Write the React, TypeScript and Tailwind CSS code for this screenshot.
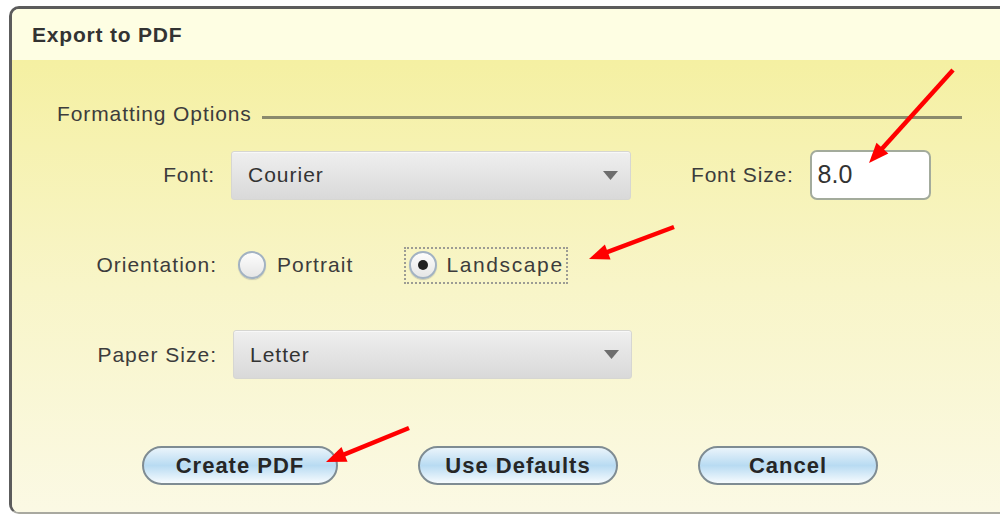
import React from "react";

type Arrow = { x1: number; y1: number; x2: number; y2: number };

// red call-outs drawn on top of the dialog
const arrows: Arrow[] = [
  { x1: 953, y1: 70, x2: 869, y2: 163 },
  { x1: 674, y1: 227, x2: 589, y2: 259 },
  { x1: 409, y1: 428, x2: 326, y2: 462 },
];

function ArrowMark({ x1, y1, x2, y2 }: Arrow) {
  const dx = x2 - x1;
  const dy = y2 - y1;
  const len = Math.hypot(dx, dy);
  const ux = dx / len;
  const uy = dy / len;
  const headLen = 20;
  const headW = 8;
  const bx = x2 - ux * headLen;
  const by = y2 - uy * headLen;
  const pts = [
    `${x2},${y2}`,
    `${bx - uy * headW},${by + ux * headW}`,
    `${bx + uy * headW},${by - ux * headW}`,
  ].join(" ");
  return (
    <g>
      <line x1={x1} y1={y1} x2={bx + ux * 2} y2={by + uy * 2} stroke="#ff0000" strokeWidth={4.5} />
      <polygon points={pts} fill="#ff0000" />
    </g>
  );
}

function Caret() {
  return (
    <svg width="15" height="9" viewBox="0 0 15 9">
      <polygon points="0,0 15,0 7.5,9" fill="#6e6e6e" />
    </svg>
  );
}

function Select({ value, width }: { value: string; width: string }) {
  return (
    <div
      className={`${width} h-[49px] flex items-center justify-between pl-[16px] pr-[12px] rounded-[3px] border border-[#d6d6d2] bg-gradient-to-b from-[#efefef] to-[#d9d9d9] shadow-[inset_0_1px_0_#f8f8f8]`}
    >
      <span className="text-[21px] tracking-[1px] text-[#333]">{value}</span>
      <Caret />
    </div>
  );
}

function Radio({ checked }: { checked?: boolean }) {
  return (
    <div className="w-[28px] h-[28px] rounded-full border-2 border-[#a2b2c2] bg-gradient-to-b from-[#fdfdfd] to-[#e6e6e6] flex items-center justify-center shadow-[0_1px_1px_#c9c9b0]">
      {checked && <div className="w-[10px] h-[10px] rounded-full bg-[#1f1f1f]" />}
    </div>
  );
}

function PillButton({ label, width }: { label: string; width: string }) {
  return (
    <div
      className={`${width} h-[39px] rounded-full border-2 border-[#7f8c93] bg-gradient-to-b from-[#eaf4fb] via-[#b8dbf2] to-[#f6fbfe] flex items-center justify-center`}
    >
      <span className="text-[22px] font-bold tracking-[1px] text-[#262626]">{label}</span>
    </div>
  );
}

export default function App() {
  return (
    <div className="relative w-[1000px] h-[516px] overflow-hidden bg-white pt-[6px] pl-[9px] font-['Liberation_Sans',Arial,sans-serif]">
      <div className="w-[1000px] h-[508px] flex flex-col overflow-hidden rounded-tl-[10px] rounded-bl-[10px] border-t-[3px] border-l-[3px] border-b-2 border-[#5c5c5c] border-b-[#a9a9a0]">
        <div className="h-[51px] shrink-0 bg-[#fefee3] pl-[20px] flex items-center">
          <span className="text-[21px] font-bold tracking-[0.8px] text-[#333]">Export to PDF</span>
        </div>

        <div className="flex-1 bg-gradient-to-b from-[#f5f0a2] via-[#f8f5c8] to-[#fbf9e4] text-[#3c3c3c]">
          {/* group heading with rule */}
          <div className="mt-[42px] pl-[45px] flex items-center">
            <span className="text-[21px] leading-[24px] tracking-[0.9px]">Formatting Options</span>
            <div className="ml-[10px] mt-[7px] w-[700px] h-[3px] bg-[#8a8a6c]" />
          </div>

          <div className="mt-[24px] pl-[85px] flex items-center">
            <span className="w-[118px] text-right text-[21px] tracking-[0.8px]">Font:</span>
            <div className="ml-[16px]">
              <Select value="Courier" width="w-[400px]" />
            </div>
            <span className="ml-[60px] text-[21px] tracking-[0.8px]">Font Size:</span>
            <div className="ml-[16px] w-[121px] h-[50px] rounded-[7px] border-2 border-[#a3ab9c] bg-white flex items-center pl-[6px]">
              <span className="text-[25px] text-[#333]">8.0</span>
            </div>
          </div>

          <div className="mt-[47px] pl-[83px] h-[36px] flex items-center">
            <span className="w-[122px] text-right text-[21px] tracking-[1px]">Orientation:</span>
            <div className="ml-[21px]">
              <Radio />
            </div>
            <span className="ml-[11px] text-[21px] tracking-[1.1px]">Portrait</span>
            <div className="ml-[50px] h-[37px] flex items-center border-2 border-dotted border-[#9c9c94] pl-[3px] pr-[2px]">
              <Radio checked />
              <span className="ml-[10px] text-[21px] tracking-[1.6px]">Landscape</span>
            </div>
          </div>

          <div className="mt-[47px] pl-[83px] flex items-center">
            <span className="w-[122px] text-right text-[21px] tracking-[1px]">Paper Size:</span>
            <div className="ml-[16px]">
              <Select value="Letter" width="w-[399px]" />
            </div>
          </div>

          <div className="mt-[67px] pl-[130px] flex items-center gap-[80px]">
            <PillButton label="Create PDF" width="w-[196px]" />
            <PillButton label="Use Defaults" width="w-[200px]" />
            <PillButton label="Cancel" width="w-[180px]" />
          </div>
        </div>
      </div>

      <svg className="absolute inset-0 pointer-events-none" width="1000" height="516">
        {arrows.map((a, i) => (
          <ArrowMark key={i} {...a} />
        ))}
      </svg>
    </div>
  );
}
